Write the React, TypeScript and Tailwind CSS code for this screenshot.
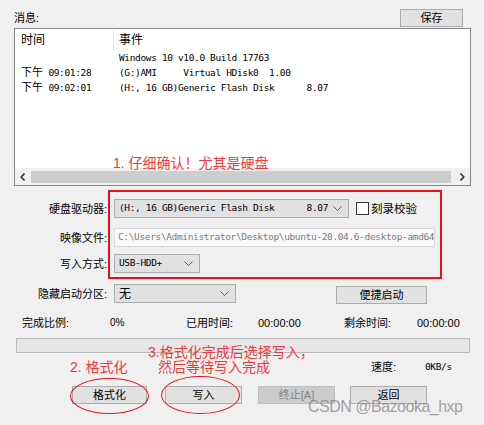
import React from "react";

const Chevron = () => (
  <svg width="9" height="5" viewBox="0 0 9 5" className="shrink-0">
    <path d="M0.5 0.5 L4.5 4.5 L8.5 0.5" fill="none" stroke="#5f5f5f" strokeWidth="1" />
  </svg>
);

function Combo({ className, children }: { className: string; children: React.ReactNode }) {
  return (
    <div
      className={
        "h-[19px] flex items-center justify-between pl-[4px] pr-[6px] border border-[#adadad] bg-[#e1e1e1] " +
        className
      }
    >
      <div className="whitespace-pre overflow-hidden">{children}</div>
      <Chevron />
    </div>
  );
}

const mono = "font-['DejaVu_Sans_Mono','Noto_Sans_CJK_SC',monospace] text-[9.5px] tracking-[-0.36px]";

function Btn({ className, children, disabled }: { className: string; children: React.ReactNode; disabled?: boolean }) {
  return (
    <div
      className={
        "h-[18px] flex items-center justify-center border leading-[14px] " +
        (disabled ? "border-[#bfbfbf] bg-[#cccccc] text-[#838383] " : "border-[#adadad] bg-[#e1e1e1] text-black ") +
        className
      }
    >
      {children}
    </div>
  );
}

export default function App() {
  return (
    <div className="relative w-[484px] h-[425px] overflow-hidden bg-[#f0f0f0] text-[11px] text-black font-['Liberation_Sans','Noto_Sans_CJK_SC',sans-serif]">
      {/* top bar */}
      <div className="flex items-end justify-between h-[28px] pl-[14px] pr-[21px]">
        <span className="leading-[14px] mb-[3px]">消息:</span>
        <Btn className="w-[63px] h-[17px] mb-[1px]">保存</Btn>
      </div>

      {/* message list */}
      <div className="ml-[14px] w-[457px] h-[158px] border border-[#828790] bg-white flex flex-col">
        <div className="flex h-[21px] items-center text-[12px]">
          <div className="w-[98px] pl-[6px] leading-[14px]">时间</div>
          <div className="h-[19px] w-px bg-[#e5e5e5]" />
          <div className="pl-[5px] leading-[14px]">事件</div>
        </div>
        {[
          ["", "Windows 10 v10.0 Build 17763"],
          ["09:01:28", "(G:)AMI     Virtual HDisk0  1.00"],
          ["09:02:01", "(H:, 16 GB)Generic Flash Disk      8.07"],
        ].map(([t, e], i) => (
          <div key={i} className="flex h-[15px] items-center">
            <div className="w-[99px] pl-[6px] flex items-center whitespace-pre">
              {t && (
                <>
                  <span className="text-[11px] leading-[13px]">下午</span>
                  <span className={mono + " leading-[13px]"}> {t}</span>
                </>
              )}
            </div>
            <div className={mono + " pl-[5px] whitespace-pre leading-[13px]"}>{e}</div>
          </div>
        ))}
        <div className="flex-1" />
        <div className="h-[17px] bg-[#f0f0f0] flex items-center">
          <div className="w-[16px] h-full flex items-center justify-center">
            <svg width="6" height="8" viewBox="0 0 6 8">
              <path d="M4.5 0.5 L1.2 4 L4.5 7.5" fill="none" stroke="#333" strokeWidth="1.6" />
            </svg>
          </div>
          <div className="flex-1 h-[12px] bg-[#cdcdcd] mr-[2px]" />
          <div className="w-[17px] h-full flex items-center justify-center">
            <svg width="6" height="8" viewBox="0 0 6 8">
              <path d="M1.5 0.5 L4.8 4 L1.5 7.5" fill="none" stroke="#333" strokeWidth="1.6" />
            </svg>
          </div>
        </div>
      </div>

      {/* form rows */}
      <div className="mt-[13px] flex items-center h-[19px]">
        <div className="w-[107px] text-right leading-[14px]">硬盘驱动器:</div>
        <Combo className={"ml-[7px] w-[235px] " + mono}>(H:, 16 GB)Generic Flash Disk      8.07</Combo>
        <div className="ml-[7px] w-[13px] h-[13px] border border-[#333] bg-white" />
        <span className="ml-[2px] leading-[14px] text-[11.5px]">刻录校验</span>
      </div>

      <div className="mt-[10px] flex items-center h-[19px]">
        <div className="w-[107px] text-right leading-[14px]">映像文件:</div>
        <div
          className={
            "ml-[7px] w-[321px] h-[19px] flex items-center pl-[3px] border border-[#d9d9d9] bg-[#fafafa] text-[#7a7a7a] whitespace-pre overflow-hidden " +
            mono
          }
        >
          C:\Users\Administrator\Desktop\ubuntu-20.04.6-desktop-amd64
        </div>
      </div>

      <div className="mt-[7px] flex items-center h-[19px]">
        <div className="w-[107px] text-right leading-[14px]">写入方式:</div>
        <Combo className={"ml-[7px] w-[86px] " + mono}>USB-HDD+</Combo>
      </div>

      <div className="mt-[11px] flex items-start h-[19px]">
        <div className="w-[107px] text-right leading-[14px] mt-[3px]">隐藏启动分区:</div>
        <Combo className="ml-[7px] w-[122px] text-[12px]">无</Combo>
        <Btn className="ml-[100px] mt-[2px] w-[91px]">便捷启动</Btn>
      </div>

      {/* status */}
      <div className="mt-[13px] flex items-center h-[14px] pl-[22px] leading-[14px]">
        <span className="w-[88px]">完成比例:</span>
        <span className="w-[76px] text-[10px]">0%</span>
        <span className="w-[72px]">已用时间:</span>
        <span className="w-[86px]">00:00:00</span>
        <span className="w-[73px]">剩余时间:</span>
        <span>00:00:00</span>
      </div>

      <div className="mt-[8px] ml-[16px] w-[454px] h-[15px] border border-[#bcbcbc] bg-[#e6e6e6]" />

      <div className="mt-[7px] flex items-center h-[14px] pl-[371px] leading-[14px]">
        <span className="w-[54px]">速度:</span>
        <span className={mono}>0KB/s</span>
      </div>

      <div className="mt-[12px] flex items-center">
        <Btn className="ml-[72px] w-[75px]">格式化</Btn>
        <Btn className="ml-[18px] w-[77px]">写入</Btn>
        <Btn className="ml-[16px] w-[77px]" disabled>
          终止[A]
        </Btn>
        <Btn className="ml-[15px] w-[77px]">返回</Btn>
      </div>

      {/* annotations */}
      <div className="absolute left-[113px] top-[154px] text-[14px] leading-[18px] text-[#ee3a3a]">1. 仔细确认！尤其是硬盘</div>
      <div className="absolute left-[108px] top-[190px] w-[334px] h-[89px] border-2 border-[#e5121b]" />
      <div className="absolute left-[148px] top-[343px] text-[14px] leading-[18px] text-[#ee3a3a]">3.格式化完成后选择写入，</div>
      <div className="absolute left-[158px] top-[358px] text-[14px] leading-[18px] text-[#ee3a3a]">然后等待写入完成</div>
      <div className="absolute left-[70px] top-[358px] text-[14px] leading-[18px] text-[#ee3a3a]">2. 格式化</div>
      <div className="absolute left-[70px] top-[378px] w-[79px] h-[36px] rounded-[50%] border-[1.5px] border-[#e0141e]" />
      <div className="absolute left-[161px] top-[376px] w-[79px] h-[38px] rounded-[50%] border-[1.5px] border-[#e0141e]" />
      <div className="absolute left-[308px] top-[397px] text-[16px] leading-[20px] tracking-[-0.5px] text-[#8a8a8a]/80">
        CSDN @Bazooka_hxp
      </div>
    </div>
  );
}
